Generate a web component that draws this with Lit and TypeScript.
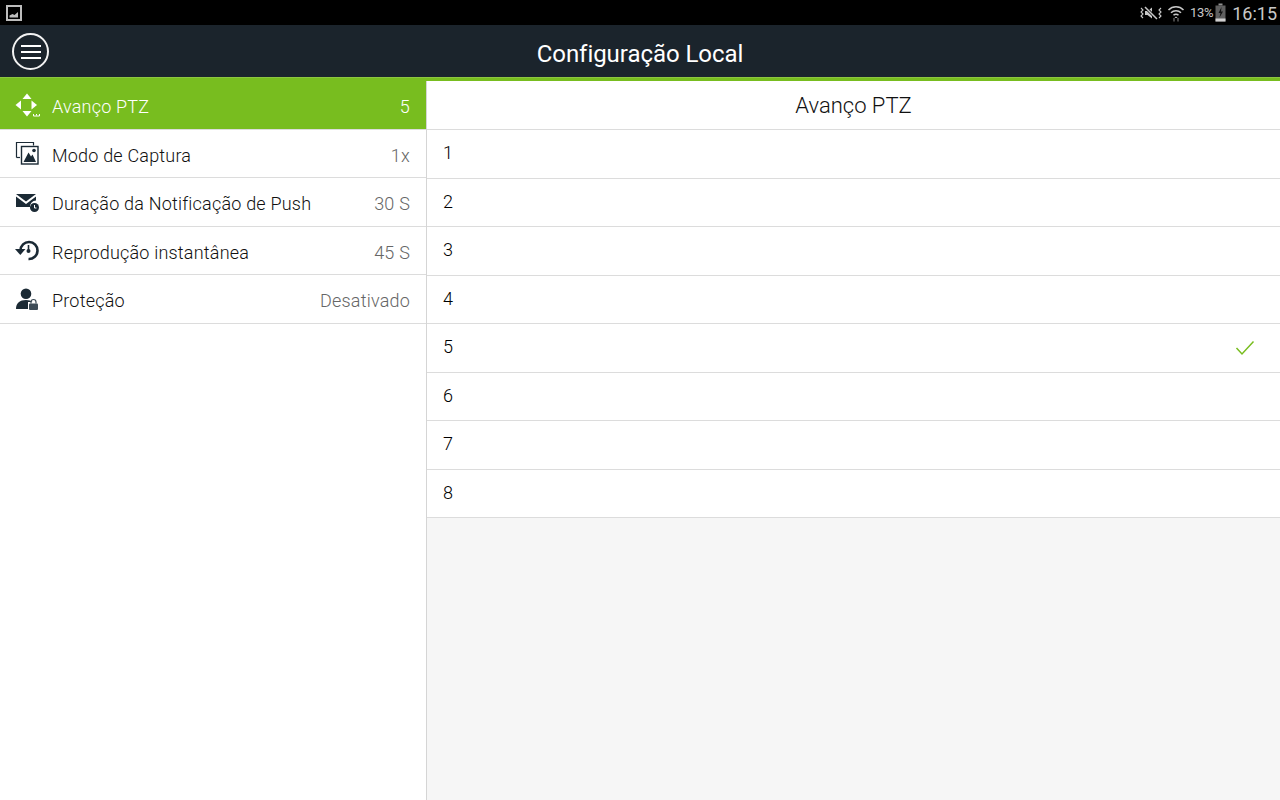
import { LitElement, html, css, svg } from "lit";
import { customElement } from "lit/decorators.js";

const icons: Record<string, any> = {
  ptz: svg`<svg class="ic" viewBox="0 0 26 26" width="26" height="26"><g fill="#fff"><path d="M13 1.500l4.500 5.500h-9z"/><path d="M13 24.500l-4.500-5.500h9z"/><path d="M1.500 13l5.500-4.500v9z"/><path d="M23 13l-5.500-4.500v9z"/></g><path d="M19.500 22v2h6v-2" fill="none" stroke="#fff" stroke-width="1"/><path d="M22.500 22v1.500" stroke="#fff" stroke-width="1"/></svg>`,
  cap: svg`<svg class="ic" viewBox="0 0 26 26" width="26" height="26"><path d="M2.500 17.500v-15h17v3" fill="none" stroke="#1b2a35" stroke-width="1.200"/><path d="M2.500 17.500h3.500" fill="none" stroke="#1b2a35" stroke-width="1.200"/><rect x="7.500" y="6.500" width="16.500" height="17.500" fill="#fff" stroke="#1b2a35" stroke-width="1.400"/><path d="M9.500 22l5-9.500 2.500 4 1.500-2 3.500 7.500z" fill="#1b2a35"/><circle cx="20" cy="10.500" r="1.800" fill="#1b2a35"/></svg>`,
  push: svg`<svg class="ic" viewBox="0 0 26 26" width="26" height="26"><path d="M2 5h20L12 12.500z" fill="#1b2a35"/><path d="M2 7.500v10.500h14a6 6 0 0 1 6-6.500V7.500L12 15z" fill="#1b2a35"/><circle cx="20.500" cy="18.500" r="4.500" fill="#1b2a35"/><path d="M20.500 16v3h2" fill="none" stroke="#fff" stroke-width="1"/></svg>`,
  replay: svg`<svg class="ic" viewBox="0 0 26 26" width="26" height="26"><path d="M6.500 13.500A8.500 8.500 0 1 1 14.500 22" fill="none" stroke="#1b2a35" stroke-width="2.600"/><path d="M1 12h10.500l-5.200 6z" fill="#1b2a35"/><path d="M14.500 8v5" stroke="#1b2a35" stroke-width="1.600"/><circle cx="14.500" cy="14" r="2" fill="#1b2a35"/></svg>`,
  lock: svg`<svg class="ic" viewBox="0 0 26 26" width="26" height="26"><circle cx="12" cy="7.800" r="5.300" fill="#1b2a35"/><path d="M2 23c0-6 4-9 10-9 3 0 5 .7 6.500 2H14v7z" fill="#1b2a35"/><rect x="15" y="17.500" width="9" height="6.500" rx="1" fill="#3d4c57"/><path d="M17 17.500v-1.500a2.500 2.500 0 0 1 5 0v1.500" fill="none" stroke="#3d4c57" stroke-width="1.200"/></svg>`,
};

const rows = [
  { i: "ptz", l: "Avanço PTZ", v: "5", active: true },
  { i: "cap", l: "Modo de Captura", v: "1x" },
  { i: "push", l: "Duração da Notificação de Push", v: "30 S" },
  { i: "replay", l: "Reprodução instantânea", v: "45 S" },
  { i: "lock", l: "Proteção", v: "Desativado" },
];

@customElement("app-root")
export class AppRoot extends LitElement {
  static styles = css`
    :host { display: block; width: 1280px; height: 800px; overflow: hidden; font-family: Roboto, "Liberation Sans", sans-serif; font-weight: 300; color: #111; background: #fff; }
    .status { height: 25px; background: #000; display: flex; align-items: center; justify-content: space-between; color: #c8c8c8; }
    .notif { margin-left: 6px; display: block; }
    .sys { display: flex; align-items: center; padding-right: 3px; }
    .pct { font-size: 13px; margin-left: 5px; letter-spacing: -0.3px; font-weight: 400; }
    .clock { font-size: 18px; margin-left: 6px; padding-top: 2px; font-weight: 400; }
    .bar { height: 52px; box-sizing: border-box; padding-top: 5px; background: #1b242c; display: flex; align-items: center; justify-content: center; position: relative; color: #fff; font-size: 24px; font-weight: 400; letter-spacing: -0.05px; }
    .menu { position: absolute; left: 12px; top: 8px; width: 33px; height: 33px; border: 2px solid #f2f2f2; border-radius: 50%; display: flex; flex-direction: column; align-items: center; justify-content: center; gap: 4px; }
    .menu i { display: block; width: 20px; height: 2px; background: #fff; }
    .accent { height: 4px; background: #78bd1f; border-top: 1px solid #8cc63f; box-sizing: border-box; }
    .main { display: grid; grid-template-columns: 426px 1px 1fr; height: 719px; }
    .left { background: #fff; }
    .divider { background: #d5d5d5; }
    .row { height: 47.500px; border-bottom: 1px solid #dcdcdc; display: flex; align-items: center; padding: 0 16px 0 14px; font-size: 18px; letter-spacing: 0.2px; }
    .row.active { background: #78bd1f; color: #fff; }
    .ic { flex: none; margin-right: 12px; display: block; }
    .lbl, .val { padding-top: 4px; }
    .lbl { flex: 1; }
    .val { color: #666; }
    .active .val { color: #fff; }
    .right { background: #f6f6f6; }
    .head { height: 47px; padding-top: 1px; background: #fff; border-bottom: 1px solid #dcdcdc; display: flex; align-items: center; justify-content: center; font-size: 22px; }
    .opt { height: 45.500px; padding: 0 25px 2px 16px; background: #fff; border-bottom: 1px solid #dcdcdc; display: flex; align-items: center; justify-content: space-between; font-size: 18px; color: #000; }
    .check { margin-top: 2px; display: block; }
  `;

  render() {
    return html`
      <div class="status">
        <svg class="notif" viewBox="0 0 16 16" width="16" height="16">
          <rect x="1" y="1" width="14" height="14" fill="none" stroke="#bdbdbd" stroke-width="2"/>
          <path d="M3.500 12.500v-2l3-1.500 2 1 3.500-3v5.500z" fill="#bdbdbd"/>
        </svg>
        <div class="sys">
          <svg viewBox="0 0 24 16" width="24" height="16">
            <g fill="none" stroke="#c8c8c8" stroke-width="1.100">
              <path d="M2 3l2 2-2 2 2 2-2 2 2 2"/><path d="M22 3l-2 2 2 2-2 2 2 2-2 2"/>
            </g>
            <path d="M6 6h2.500L13 2.500v11L8.500 10H6z" fill="#c8c8c8"/>
            <path d="M6 2l12 12" stroke="#000" stroke-width="3"/><path d="M6 2l12 12" stroke="#c8c8c8" stroke-width="1.500"/>
          </svg>
          <svg viewBox="0 0 18 18" width="18" height="18" style="margin-left:4px">
            <g fill="none" stroke="#c8c8c8" stroke-width="1.500">
              <path d="M1.500 6a10.500 10.500 0 0 1 15 0"/><path d="M4 8.800a7 7 0 0 1 10 0"/><path d="M6.500 11.300a3.500 3.500 0 0 1 5 0"/>
            </g>
            <path d="M9 12.500l1.500 1.500h-3z" fill="#c8c8c8"/>
            <path d="M7 14v3.500M11 14v3.500" stroke="#8a8a8a" stroke-width="1"/>
          </svg>
          <span class="pct">13%</span>
          <svg viewBox="0 0 11 19" width="11" height="19" style="margin-left:2px">
            <rect x="3.500" y="0.500" width="4" height="2" fill="#8f8f8f"/>
            <rect x="0.500" y="2.500" width="10" height="16" fill="#5f5f5f"/>
            <rect x="0.500" y="15.500" width="10" height="3" fill="#d0d0d0"/>
            <path d="M6.500 4l-3 6h2l-1 4.500 3.500-6h-2z" fill="#111"/>
          </svg>
          <span class="clock">16:15</span>
        </div>
      </div>
      <div class="bar">
        <div class="menu"><i></i><i></i><i></i></div>
        Configuração Local
      </div>
      <div class="accent"></div>
      <div class="main">
        <div class="left">
          ${rows.map(
            (r) => html`<div class="row ${r.active ? "active" : ""}">
              ${icons[r.i]}<span class="lbl">${r.l}</span><span class="val">${r.v}</span>
            </div>`
          )}
        </div>
        <div class="divider"></div>
        <div class="right">
          <div class="head">Avanço PTZ</div>
          ${[1, 2, 3, 4, 5, 6, 7, 8].map(
            (n) => html`<div class="opt">
              <span>${n}</span>
              ${n === 5
                ? svg`<svg class="check" viewBox="0 0 20 16" width="20" height="16"><path d="M1.500 8l5.500 6L18.500 1.500" fill="none" stroke="#78bd1f" stroke-width="1.500"/></svg>`
                : ""}
            </div>`
          )}
        </div>
      </div>
    `;
  }
}
